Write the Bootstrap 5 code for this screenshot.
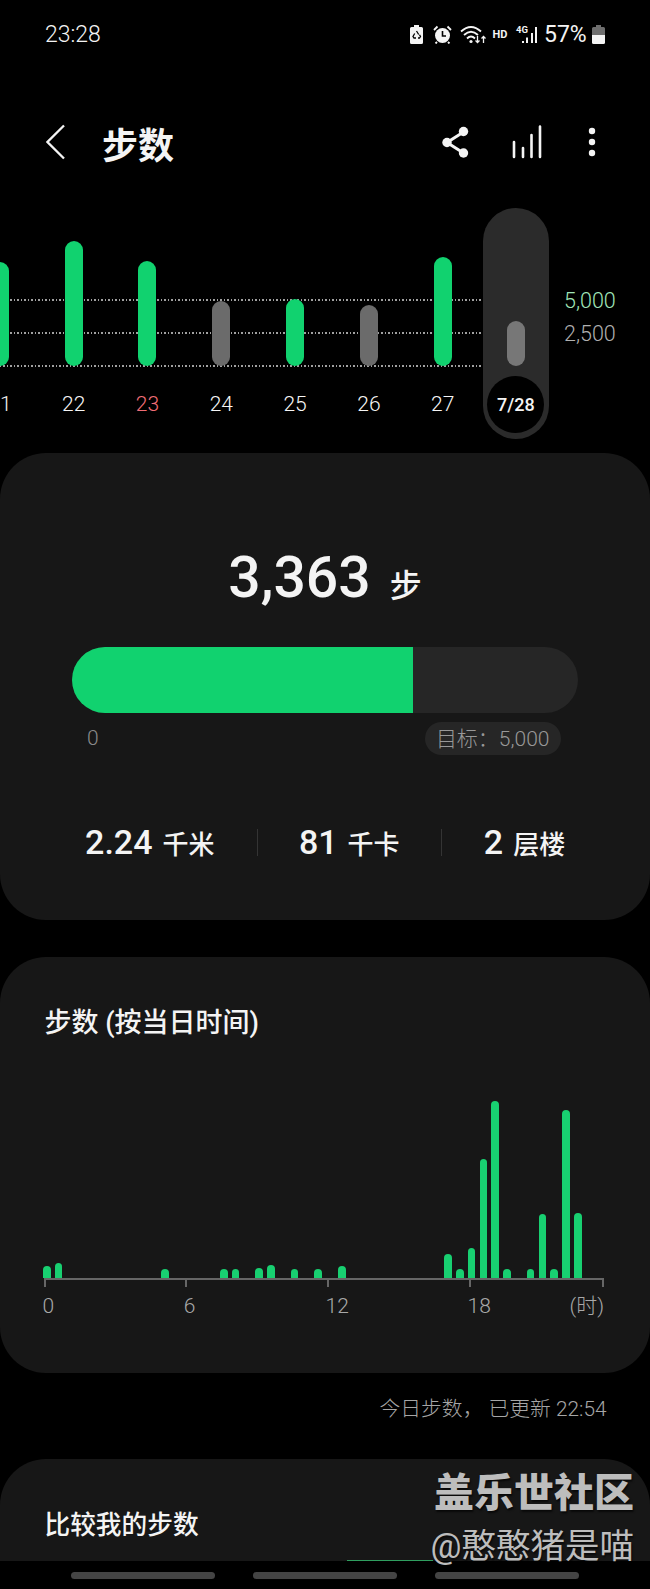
<!doctype html>
<html lang="zh-CN">
<head>
<meta charset="utf-8">
<title>步数</title>
<link href="https://cdn.jsdelivr.net/npm/bootstrap@5.3.0/dist/css/bootstrap.min.css" rel="stylesheet">
<style>
html,body{background:#000;margin:0}
body{width:650px;height:1589px;overflow:hidden;position:relative;color:#f4f4f4;font-family:Roboto,"Noto Sans CJK SC",sans-serif}
.statusrow{height:69px;padding:0 45px;font-size:23px;line-height:1;font-weight:300}
.sicons svg{display:block;flex:none}
.hdtxt{font-size:11px;font-weight:700;width:16px;margin:0 8px 0 6px;text-align:center}
.sig4g{width:21px;height:19px;margin-right:7px}
.g4txt{font-size:9.5px;font-weight:700;line-height:1;top:0;left:0}
.pct{width:43px;margin-right:5px;white-space:nowrap;font-weight:400}
.apphead{height:70px;margin-top:38px;padding-left:46px}
.apptitle{font-size:36px;font-weight:700;line-height:80px;margin:10px 0 0 36px}
.headicons svg{display:block}
.weekwrap{height:231px;margin-top:31px}
.dotline{left:0;width:483px;height:1.5px;background:repeating-linear-gradient(90deg,#a0a0a0 0 1.5px,transparent 1.5px 3.5px)}
.dayrow{margin-left:-37px}
.daycol{width:73.8px;flex:none}
.barzone{height:157.6px}
.weekbar{width:18px;border-radius:9px;background:#11d26f}
.weekbar.idle{background:#6b6b6b}
.daylbl{font-size:21px;line-height:24px;margin-top:26.4px;color:#f6f6f6;font-weight:300}
.daylbl.sun{color:#f06d76}
.todaypill{width:66px;height:231px;flex:none;margin-left:3.4px;background:#2b2b2b;border-radius:33px}
.todaycircle{width:57px;height:57px;border-radius:50%;background:#000;margin-top:10.400px;font-size:18px;font-weight:500}
.goalcol{margin-left:15px;padding-top:76px;font-size:21.500px;line-height:33px;font-weight:300}
.goalg{color:#a0e6b9}.goalk{color:#b0b0b0}
.panel{background:#171717;border-radius:46px}
.panel1{height:467px;margin-top:14px;padding-top:94px}
.bigrow{height:62px;line-height:62px}
.bignum{font-size:57px;font-weight:500}
.bigunit{font-size:32px;font-weight:500;margin-left:19px}
.prog{margin:38px 0 0 72px;width:505.5px;height:65.5px;background:#262626;border-radius:33px}
.progfill{width:340.5px;height:100%;background:#11d26f}
.underbar{margin-top:9px;padding:0 89.5px 0 87px;color:#8a8a8a;font-size:21px;height:33.5px;font-weight:300}
.goalchip{background:#262626;color:#989898;padding:0 11px;height:33.5px;line-height:34.500px;white-space:nowrap;border-radius:17px}
.statsrow{margin:67.7px 0 0 43px;height:40px}
.statcell{flex:none;text-align:center;white-space:nowrap}
.statnum{font-size:34px;font-weight:500}
.statunit{font-size:26px;font-weight:500;margin-left:10px}
.statdiv{width:1px;height:27px;background:#343434;flex:none}
.panel2{height:416px;margin-top:37px;padding-top:50px}
.paneltitle{font-size:27px;font-weight:500;line-height:32px;padding-left:44.500px;margin:0}
.hourbars{height:238.5px;margin-left:41px}
.hourslot{width:11.8px;flex:none}
.hourbar{width:7.6px;border-radius:4px 4px 0 0;background:#18d071}
.axisgrid{display:grid;grid-template-columns:141.3px 141.7px 142px 135px;margin-left:44px;width:560px}
.tickcell{height:9px;border-top:2px solid #666;border-left:2px solid #666}
.tickcell.lastc{border-right:2px solid #666}
.hourlbl{font-size:21px;line-height:28px;margin:5px 0 0 -1.500px;color:#a8a8a8;white-space:nowrap;font-weight:300}
.updated{font-size:20.800px;line-height:30px;margin-top:21px;padding-right:43.500px;color:#a6a6a6;text-align:right;font-weight:300}
.panel3{height:102.4px;margin-top:35px;padding-top:50px;overflow:hidden;border-radius:46px 46px 0 0}
.panel3 .paneltitle{font-size:25.7px}
.peekline{width:86.4px;height:2px;margin:19px 0 0 346.6px;background:#2f9e5f}
.navstrip{height:27.3px;padding:10.3px 0 0 71px;gap:38px;background:#000}
.navpill{width:144px;height:7.3px;border-radius:3.5px;background:#444}
.wmark{right:16px;top:1470px;color:#bdbdbd;text-align:right;white-space:nowrap;text-shadow:1px 2px 2px rgba(0,0,0,.65)}
.wm1{font-size:40px;font-weight:900;line-height:48px}
.wm2{font-size:34.500px;font-weight:400;line-height:46px;margin-top:5px}
</style>
</head>
<body>

<div class="statusrow d-flex align-items-center justify-content-between">
  <span>23:28</span>
  <div class="sicons d-flex align-items-center">
    <svg width="13" height="19" viewBox="0 0 13 19" style="margin-right:10px"><path d="M4 0h5v2h2.500Q13 2 13 3.500V17.500Q13 19 11.500 19H1.500Q0 19 0 17.500V3.500Q0 2 1.500 2H4z" fill="#f4f4f4"/><path d="M6.500 6l2.200 3.500M4.700 8.500l-1.700 3 1 1.500h2M8 13h1.500l1-1.500-1-1.800" fill="none" stroke="#000" stroke-width="1.300"/></svg>
    <svg width="19" height="19" viewBox="0 0 19 19" style="margin-right:8px"><circle cx="9.500" cy="10.500" r="7.500" fill="#f4f4f4"/><path d="M9.500 6v5h3.500" fill="none" stroke="#000" stroke-width="1.600"/><path d="M1 5l3.500-3.500M18 5l-3.500-3.500M4 17l-1.500 1.500M15 17l1.500 1.500" stroke="#f4f4f4" stroke-width="1.800" fill="none"/></svg>
    <svg width="26" height="19" viewBox="0 0 26 19"><g fill="none" stroke="#f4f4f4" stroke-width="1.800"><path d="M1 6.500Q11 -2.500 21 6.500"/><path d="M4 10Q11 3.500 18 10"/><path d="M7 13.500Q11 9.500 15 13.500"/></g><circle cx="11" cy="16.500" r="1.600" fill="#f4f4f4"/><path d="M17.500 11v6M15.500 15.500l2 2 2-2M23.500 18v-6M21.500 13.500l2-2 2 2" fill="none" stroke="#f4f4f4" stroke-width="1.300"/></svg>
    <span class="hdtxt">HD</span>
    <div class="sig4g position-relative">
      <span class="g4txt position-absolute">4G</span>
      <svg width="21" height="19" viewBox="0 0 21 19"><path d="M7 18v-2M11 18v-5.500M16 18v-10M20 18V2" stroke="#f4f4f4" stroke-width="2" fill="none"/></svg>
    </div>
    <span class="pct">57%</span>
    <svg width="13" height="19" viewBox="0 0 13 19"><path d="M4 0h5v2h2.500Q13 2 13 3.500V10H0V3.500Q0 2 1.500 2H4z" fill="#6e6e6e"/><path d="M0 10h13v7.500Q13 19 11.500 19H1.500Q0 19 0 17.500z" fill="#f4f4f4"/></svg>
  </div>
</div>

<header class="apphead d-flex align-items-center">
  <svg width="20" height="36" viewBox="0 0 20 36" fill="none" style="flex:none"><path d="M18 1.500L1.500 18 18 34.500" stroke="#f4f4f4" stroke-width="2.300"/></svg>
  <h1 class="apptitle">步数</h1>
  <div class="headicons d-flex align-items-center ms-auto">
    <svg width="30" height="34" viewBox="0 0 30 34" style="margin-right:40px"><path d="M22.500 7L6 17.500 22.500 28" fill="none" stroke="#f4f4f4" stroke-width="3"/><circle cx="22.500" cy="6.500" r="4.700" fill="#f4f4f4"/><circle cx="6" cy="17.500" r="4.700" fill="#f4f4f4"/><circle cx="22.500" cy="28" r="4.700" fill="#f4f4f4"/></svg>
    <svg width="32" height="34" viewBox="0 0 32 34" style="margin-right:45px"><path d="M3 32V17M12 32V23M20.500 32V10M29 32V1.500" stroke="#f4f4f4" stroke-width="2.600" stroke-linecap="round" fill="none"/></svg>
    <svg width="8" height="34" viewBox="0 0 8 34" style="margin-right:54px"><circle cx="4" cy="6" r="3.200" fill="#f4f4f4"/><circle cx="4" cy="17" r="3.200" fill="#f4f4f4"/><circle cx="4" cy="28" r="3.200" fill="#f4f4f4"/></svg>
  </div>
</header>

<section class="weekwrap position-relative">
  <div class="dotline position-absolute" style="top:91px"></div>
  <div class="dotline position-absolute" style="top:124px"></div>
  <div class="dotline position-absolute" style="top:157px"></div>
  <div class="dayrow d-flex position-relative">
    <div class="daycol d-flex flex-column align-items-center"><div class="barzone d-flex align-items-end"><div class="weekbar" style="height:104px"></div></div><div class="daylbl">21</div></div>
    <div class="daycol d-flex flex-column align-items-center"><div class="barzone d-flex align-items-end"><div class="weekbar" style="height:125px"></div></div><div class="daylbl">22</div></div>
    <div class="daycol d-flex flex-column align-items-center"><div class="barzone d-flex align-items-end"><div class="weekbar" style="height:105px"></div></div><div class="daylbl sun">23</div></div>
    <div class="daycol d-flex flex-column align-items-center"><div class="barzone d-flex align-items-end"><div class="weekbar idle" style="height:65px"></div></div><div class="daylbl">24</div></div>
    <div class="daycol d-flex flex-column align-items-center"><div class="barzone d-flex align-items-end"><div class="weekbar" style="height:67px"></div></div><div class="daylbl">25</div></div>
    <div class="daycol d-flex flex-column align-items-center"><div class="barzone d-flex align-items-end"><div class="weekbar idle" style="height:61px"></div></div><div class="daylbl">26</div></div>
    <div class="daycol d-flex flex-column align-items-center"><div class="barzone d-flex align-items-end"><div class="weekbar" style="height:109px"></div></div><div class="daylbl">27</div></div>
    <div class="todaypill d-flex flex-column align-items-center">
      <div class="barzone d-flex align-items-end"><div class="weekbar idle" style="height:45px;background:#777"></div></div>
      <div class="todaycircle d-flex align-items-center justify-content-center">7/28</div>
    </div>
    <div class="goalcol"><div class="goalg">5,000</div><div class="goalk">2,500</div></div>
  </div>
</section>

<section class="panel panel1">
  <div class="bigrow text-center"><span class="bignum">3,363</span><span class="bigunit">步</span></div>
  <div class="prog overflow-hidden"><div class="progfill"></div></div>
  <div class="underbar d-flex justify-content-between align-items-center"><span>0</span><span class="goalchip">目标：5,000</span></div>
  <div class="statsrow d-flex align-items-center">
    <div class="statcell" style="width:213.6px"><span class="statnum">2.24</span><span class="statunit">千米</span></div>
    <div class="statdiv"></div>
    <div class="statcell" style="width:183.4px"><span class="statnum">81</span><span class="statunit">千卡</span></div>
    <div class="statdiv"></div>
    <div class="statcell" style="width:165px"><span class="statnum">2</span><span class="statunit">层楼</span></div>
  </div>
</section>

<section class="panel panel2">
  <h2 class="paneltitle">步数 (按当日时间)</h2>
  <div class="hourbars d-flex align-items-end">
    <div class="hourslot d-flex justify-content-center"><div class="hourbar" style="height:12px"></div></div>
    <div class="hourslot d-flex justify-content-center"><div class="hourbar" style="height:15px"></div></div>
    <div class="hourslot"></div><div class="hourslot"></div><div class="hourslot"></div><div class="hourslot"></div><div class="hourslot"></div><div class="hourslot"></div><div class="hourslot"></div><div class="hourslot"></div>
    <div class="hourslot d-flex justify-content-center"><div class="hourbar" style="height:9px"></div></div>
    <div class="hourslot"></div><div class="hourslot"></div><div class="hourslot"></div><div class="hourslot"></div>
    <div class="hourslot d-flex justify-content-center"><div class="hourbar" style="height:9px"></div></div>
    <div class="hourslot d-flex justify-content-center"><div class="hourbar" style="height:9px"></div></div>
    <div class="hourslot"></div>
    <div class="hourslot d-flex justify-content-center"><div class="hourbar" style="height:10px"></div></div>
    <div class="hourslot d-flex justify-content-center"><div class="hourbar" style="height:13px"></div></div>
    <div class="hourslot"></div>
    <div class="hourslot d-flex justify-content-center"><div class="hourbar" style="height:9px"></div></div>
    <div class="hourslot"></div>
    <div class="hourslot d-flex justify-content-center"><div class="hourbar" style="height:9px"></div></div>
    <div class="hourslot"></div>
    <div class="hourslot d-flex justify-content-center"><div class="hourbar" style="height:12px"></div></div>
    <div class="hourslot"></div><div class="hourslot"></div><div class="hourslot"></div><div class="hourslot"></div><div class="hourslot"></div><div class="hourslot"></div><div class="hourslot"></div><div class="hourslot"></div>
    <div class="hourslot d-flex justify-content-center"><div class="hourbar" style="height:24px"></div></div>
    <div class="hourslot d-flex justify-content-center"><div class="hourbar" style="height:9px"></div></div>
    <div class="hourslot d-flex justify-content-center"><div class="hourbar" style="height:30px"></div></div>
    <div class="hourslot d-flex justify-content-center"><div class="hourbar" style="height:119px"></div></div>
    <div class="hourslot d-flex justify-content-center"><div class="hourbar" style="height:177px"></div></div>
    <div class="hourslot d-flex justify-content-center"><div class="hourbar" style="height:9px"></div></div>
    <div class="hourslot"></div>
    <div class="hourslot d-flex justify-content-center"><div class="hourbar" style="height:9px"></div></div>
    <div class="hourslot d-flex justify-content-center"><div class="hourbar" style="height:64px"></div></div>
    <div class="hourslot d-flex justify-content-center"><div class="hourbar" style="height:9px"></div></div>
    <div class="hourslot d-flex justify-content-center"><div class="hourbar" style="height:168px"></div></div>
    <div class="hourslot d-flex justify-content-center"><div class="hourbar" style="height:65px"></div></div>
  </div>
  <div class="axisgrid">
    <div class="tickcell"></div><div class="tickcell"></div><div class="tickcell"></div><div class="tickcell lastc"></div>
    <div class="hourlbl">0</div><div class="hourlbl">6</div><div class="hourlbl">12</div><div class="hourlbl d-flex justify-content-between"><span>18</span><span>(时)</span></div>
  </div>
</section>

<p class="updated mb-0">今日步数， 已更新 22:54</p>

<section class="panel panel3">
  <h2 class="paneltitle">比较我的步数</h2>
  <div class="peekline"></div>
</section>

<nav class="navstrip d-flex"><span class="navpill"></span><span class="navpill"></span><span class="navpill"></span></nav>

<div class="wmark position-absolute">
  <div class="wm1">盖乐世社区</div>
  <div class="wm2">@憨憨猪是喵</div>
</div>
</body>
</html>
